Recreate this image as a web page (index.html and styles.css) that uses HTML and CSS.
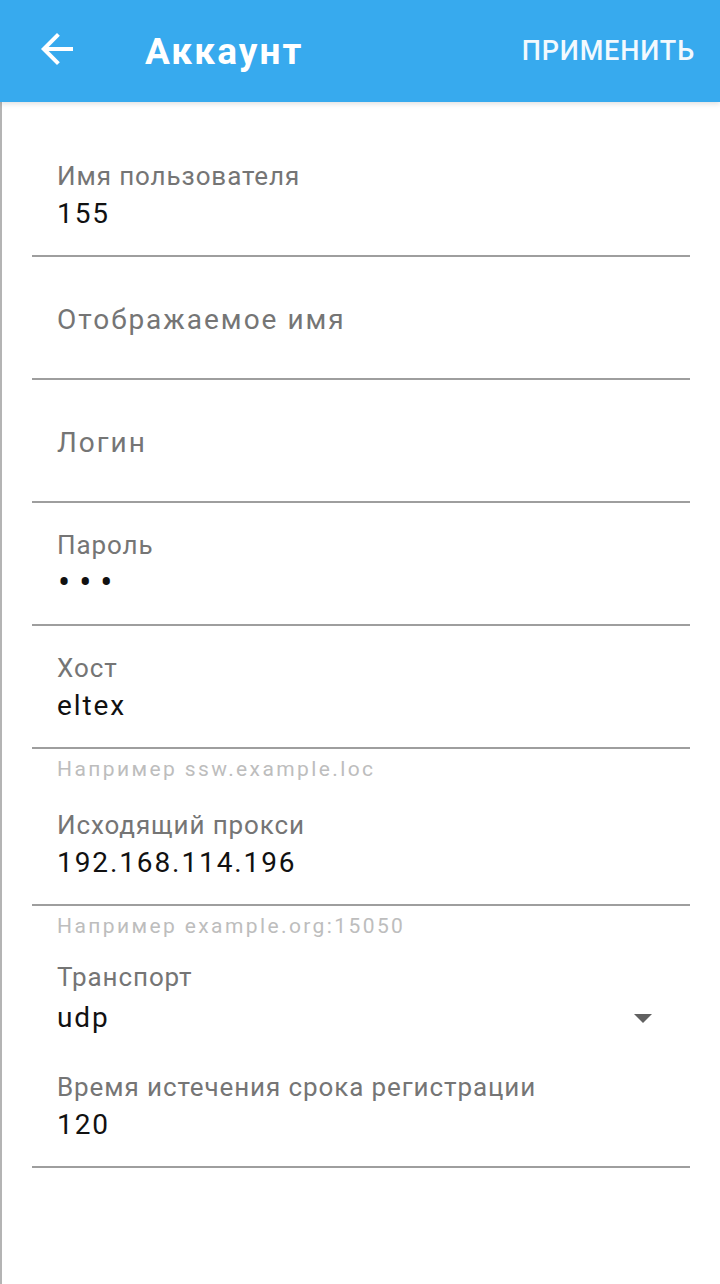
FILE: index.html
```html
<!DOCTYPE html>
<html lang="ru">
<head>
<meta charset="utf-8">
<title>Аккаунт</title>
<link rel="stylesheet" href="styles.css">
</head>
<body>
<header class="appbar">
  <div class="back">
    <svg viewBox="0 0 24 24" width="48" height="48"><path d="M20 11H7.83l5.59-5.59L12 4l-8 8 8 8 1.41-1.41L7.83 13H20v-2z" fill="#fff"/></svg>
  </div>
  <h1 class="title">Аккаунт</h1>
  <div class="action">ПРИМЕНИТЬ</div>
</header>
<main class="content">
  <div class="field">
    <div class="label">Имя пользователя</div>
    <div class="value">155</div>
  </div>
  <div class="field empty">
    <div class="placeholder">Отображаемое имя</div>
  </div>
  <div class="field empty">
    <div class="placeholder">Логин</div>
  </div>
  <div class="field">
    <div class="label">Пароль</div>
    <div class="value dots">•••</div>
  </div>
  <div class="field">
    <div class="label">Хост</div>
    <div class="value">eltex</div>
  </div>
  <div class="helper">Например ssw.example.loc</div>
  <div class="field">
    <div class="label">Исходящий прокси</div>
    <div class="value">192.168.114.196</div>
  </div>
  <div class="helper">Например example.org:15050</div>
  <div class="spinner">
    <div class="label">Транспорт</div>
    <div class="spinner-row">
      <div class="value">udp</div>
      <div class="arrow"></div>
    </div>
  </div>
  <div class="field">
    <div class="label">Время истечения срока регистрации</div>
    <div class="value">120</div>
  </div>
</main>
</body>
</html>
```
FILE: styles.css
```css
* { box-sizing: border-box; }
html, body { margin: 0; padding: 0; }
body {
  width: 720px;
  height: 1284px;
  background: #fff;
  font-family: Roboto, "Noto Sans", sans-serif;
  overflow: hidden;
}
.appbar {
  height: 102px;
  background: #37aaee;
  display: flex;
  align-items: center;
  color: #fff;
  position: relative;
  z-index: 2;
  box-shadow: 0 2px 5px rgba(0,0,0,0.12);
}
.back {
  width: 48px;
  height: 48px;
  margin-left: 33px;
  margin-top: -4px;
  display: flex;
}
.title {
  margin: 0 0 0 64px;
  font-size: 37px;
  font-weight: 700;
  letter-spacing: 2.1px;
  flex: 1;
  line-height: 1;
}
.action {
  font-size: 27px;
  font-weight: 500;
  margin-right: 25px;
  letter-spacing: 0.85px;
  color: #f2f9fe;
}
.content {
  border-left: 2px solid #b4b4b4;
  height: 1182px;
  padding: 32px 30px 0 30px;
}
.field {
  height: 123px;
  border-bottom: 2px solid #9e9e9e;
  padding: 27px 0 0 25px;
}
.label {
  font-size: 26px;
  line-height: 30px;
  letter-spacing: 0.9px;
  color: #757575;
}
.value {
  margin-top: 4px;
  font-size: 28px;
  line-height: 38px;
  letter-spacing: 1.9px;
  color: #111;
}
.value.dots {
  font-size: 36px;
  letter-spacing: 9px;
  margin-left: 1px;
}
.field.empty {
  padding-top: 44px;
}
.placeholder {
  font-size: 28px;
  line-height: 38px;
  letter-spacing: 2px;
  color: #757575;
}
.helper {
  height: 34px;
  padding: 8px 0 0 25px;
  font-size: 21px;
  line-height: 24px;
  letter-spacing: 2.4px;
  color: #bdbdbd;
}
.spinner {
  height: 105px;
  padding: 22px 0 0 25px;
}
.spinner .value { margin-top: 7px; }
.spinner-row {
  display: flex;
  align-items: center;
  justify-content: space-between;
  padding-right: 38px;
}
.arrow {
  width: 0;
  height: 0;
  border-left: 9px solid transparent;
  border-right: 9px solid transparent;
  border-top: 9px solid #616161;
  margin-top: 8px;
}
```
